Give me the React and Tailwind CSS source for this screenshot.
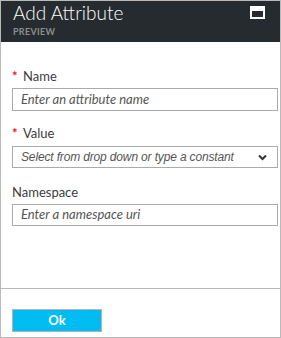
import React from "react";

const font = { fontFamily: 'Lato, "Open Sans", sans-serif' };
const arial = { fontFamily: '"Liberation Sans", Arial, sans-serif' };

function Label({ children, required }) {
  return (
    <div className="flex items-start h-[16px] text-[13px] leading-[16px] text-[#3c3c3c]">
      {required ? (
        <span className="text-[#e81123] text-[13px] leading-[16px] w-[11px] font-bold">*</span>
      ) : null}
      <span>{children}</span>
    </div>
  );
}

export default function App() {
  return (
    <div style={font} className="w-[281px] h-[338px] border border-[#bababa] bg-white flex flex-col box-border">
      <div className="h-[41px] bg-[#262b30] flex justify-between pl-[12px] pr-[15px]">
        <div className="flex flex-col">
          <div className="text-white text-[19px] leading-[22px] mt-[1px] font-light">Add Attribute</div>
          <div className="text-[#8b8e91] text-[9px] font-bold leading-[10px] mt-[3px] tracking-[0.3px]">PREVIEW</div>
        </div>
        <div className="mt-[5px] w-[15px] h-[13px] bg-white p-[2px] pt-[5px]">
          <div className="w-full h-full bg-[#262b30]" />
        </div>
      </div>
      <div className="h-[246px] pl-[11px] pr-[2px] pt-[26px]">
        <Label required>Name</Label>
        <div className="mt-[4px] h-[23px] border border-[#ababab] flex items-center pl-[8px] text-[13px] italic text-[#555]">
          Enter an attribute name
        </div>
        <div className="mt-[14px]">
          <Label required>Value</Label>
        </div>
        <div className="mt-[5px] h-[22px] border border-[#ababab] flex items-center justify-between pl-[8px] pr-[10px] italic text-[#555]">
          <span style={arial} className="text-[12px] tracking-[-0.15px] whitespace-nowrap">
            Select from drop down or type a constant
          </span>
          <svg width="9" height="7" viewBox="0 0 9 7">
            <path d="M1 1.5 L4.5 5 L8 1.5" fill="none" stroke="#333" strokeWidth="2" />
          </svg>
        </div>
        <div className="mt-[16px]">
          <Label>Namespace</Label>
        </div>
        <div className="mt-[4px] h-[22px] border border-[#ababab] flex items-center pl-[8px] text-[13px] italic text-[#555]">
          Enter a namespace uri
        </div>
      </div>
      <div className="flex-1 border-t border-[#bababa] pl-[11px] pt-[20px]">
        <div className="w-[90px] h-[23px] bg-[#00bcf2] border border-[#b4b4b4] flex items-center justify-center text-white text-[13px] font-bold">
          Ok
        </div>
      </div>
    </div>
  );
}
